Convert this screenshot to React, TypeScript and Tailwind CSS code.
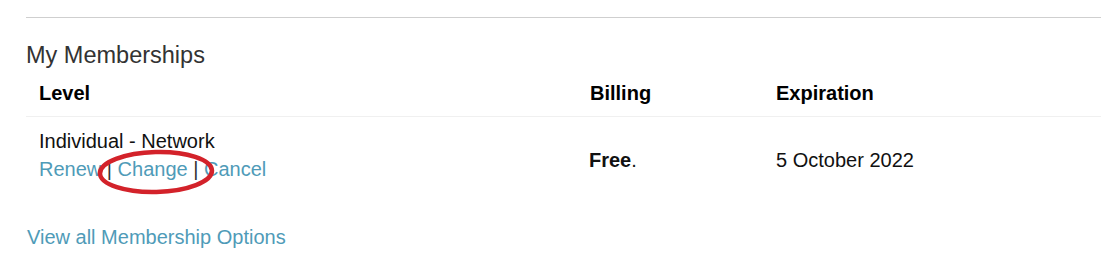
import React from 'react'

const linkClass = 'text-[#4f9bb8] hover:underline'

export default function App() {
  return (
    <div className="min-h-screen bg-white pl-[26px] pt-[17px] font-['Liberation_Sans',Arial,sans-serif]">
      <div className="border-t border-[#cfcfcf]">
        <h2 className="pt-[24px] text-[23.5px] leading-[26px] text-[#333]">My Memberships</h2>

        <table className="w-full border-collapse text-left text-[20px] text-[#111]">
          <thead>
            <tr className="border-b border-[#f0f0f0]">
              <th className="w-[551px] pl-[13px] pt-[15px] pb-[13px] text-[20px] leading-[20px] font-bold text-black">Level</th>
              <th className="w-[186px] pl-[13px] pt-[15px] pb-[13px] text-[20px] leading-[20px] font-bold text-black">Billing</th>
              <th className="pl-[13px] pt-[15px] pb-[13px] text-[20px] leading-[20px] font-bold text-black">Expiration</th>
            </tr>
          </thead>
          <tbody>
            <tr>
              <td className="pl-[13px] pt-[10px] pb-[20px] align-top leading-[28px]">
                <div>Individual - Network</div>
                <div className="relative inline-block text-[#333]">
                  <a href="#" className={linkClass}>Renew</a> | <a href="#" className={linkClass}>Change</a> | <a href="#" className={linkClass}>Cancel</a>
                  <svg className="pointer-events-none absolute left-[56px] top-[-8px]" width="124" height="50" viewBox="0 0 124 50">
                    <ellipse cx="61" cy="25" rx="56" ry="20" fill="none" stroke="#d3222a" strokeWidth="4.5" transform="rotate(-1.5 61 25)" />
                  </svg>
                </div>
              </td>
              <td className="pl-[12px] align-middle leading-[28px]">
                <b>Free</b>.
              </td>
              <td className="pl-[13px] align-middle leading-[28px]">5 October 2022</td>
            </tr>
          </tbody>
        </table>

        <a href="#" className={`${linkClass} mt-[20px] block w-fit pl-px text-[20px] leading-[28px]`}>
          View all Membership Options
        </a>
      </div>
    </div>
  )
}
